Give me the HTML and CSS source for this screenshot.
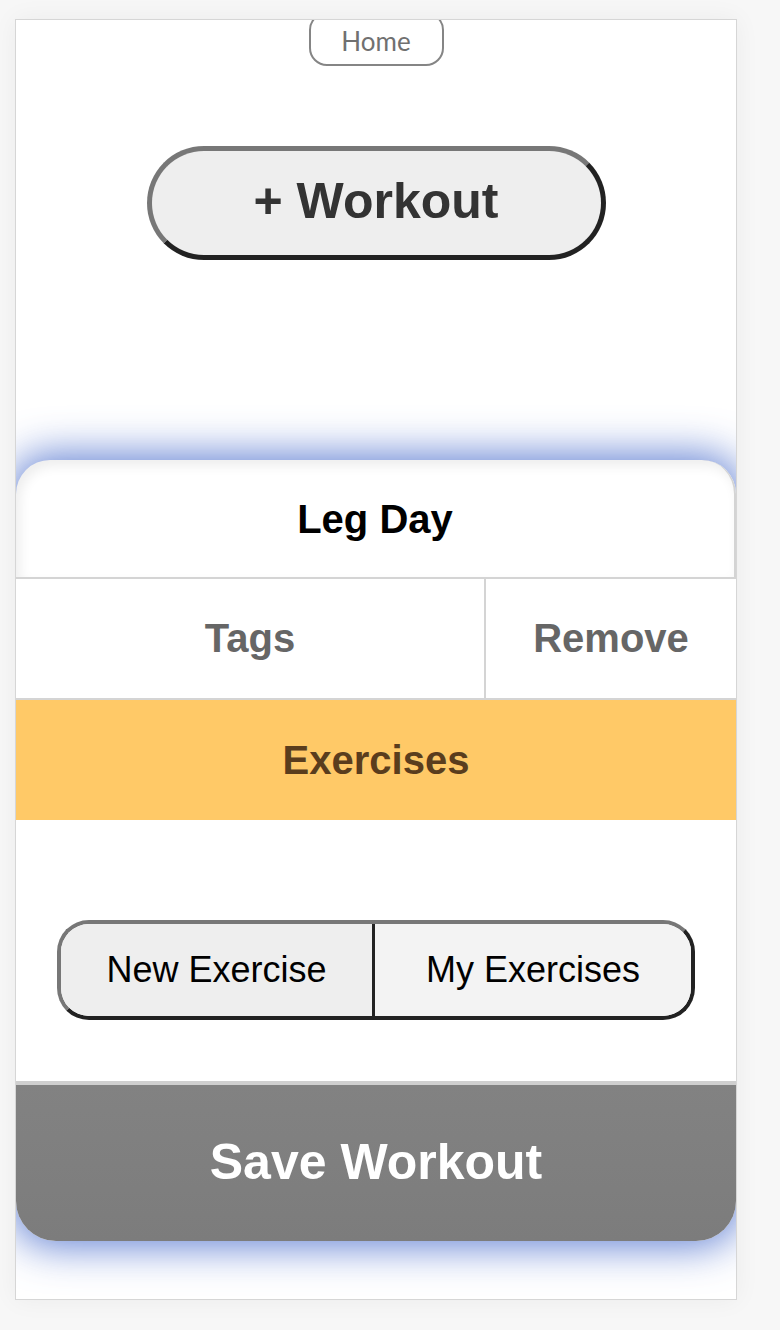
FILE: index.html
```html
<!DOCTYPE html>
<html lang="en">
<head>
<meta charset="utf-8">
<title>Workout</title>
<link rel="stylesheet" href="styles.css">
</head>
<body>
<div class="frame">
  <div class="top">
    <button class="home-btn">Home</button>
    <button class="add-workout">+ Workout</button>
  </div>
  <section class="card">
    <header class="card-title">Leg Day</header>
    <div class="actions">
      <div class="action tags">Tags</div>
      <div class="action remove">Remove</div>
    </div>
    <div class="exercises">Exercises</div>
    <div class="exercise-area">
      <div class="segment">
        <button class="seg seg-left">New Exercise</button>
        <button class="seg seg-right">My Exercises</button>
      </div>
    </div>
    <button class="save">Save Workout</button>
  </section>
</div>
</body>
</html>
```
FILE: styles.css
```css
* { box-sizing: border-box; }
html, body { margin: 0; padding: 0; }
body {
  background: #f7f7f7;
  font-family: "Liberation Sans", Arial, sans-serif;
  width: 780px;
  height: 1330px;
}
.frame {
  margin: 19px 0 0 15px;
  width: 722px;
  height: 1281px;
  background: #fff;
  border: 1px solid #d6d6d6;
  overflow: hidden;
  box-shadow: 0 0 24px rgba(0,0,0,0.05);
}
.top {
  display: flex;
  flex-direction: column;
  align-items: center;
}
button {
  font-family: inherit;
  cursor: pointer;
}
.home-btn {
  margin-top: -8px;
  width: 135px;
  height: 54px;
  border: 2px solid #858585;
  border-radius: 18px;
  background: #fff;
  color: #707070;
  font-family: Lato, "Open Sans", sans-serif;
  font-size: 26px;
  padding: 3px 0 0;
}
.add-workout {
  margin-top: 80px;
  width: 459px;
  height: 114px;
  border: 5px solid;
  border-color: #777 #222 #222 #777;
  border-radius: 57px;
  background: #eee;
  color: #333;
  font-size: 50px;
  font-weight: bold;
  padding: 0 0 4px;
}
.card {
  margin-top: 200px;
  display: flex;
  flex-direction: column;
  border-radius: 34px 34px 40px 40px;
  box-shadow: 0 0 40px 6px rgba(75,110,205,0.85);
  background: #fff;
}
.card-title {
  height: 119px;
  display: flex;
  align-items: center;
  justify-content: center;
  font-size: 40px;
  font-weight: bold;
  color: #000;
  border-radius: 34px 34px 0 0;
  border-right: 2px solid #d4d4d4;
  border-bottom: 2px solid #d4d4d4;
  box-shadow: inset 4px 6px 12px rgba(0,0,0,0.07);
  padding-top: 2px;
}
.actions {
  display: grid;
  grid-template-columns: 470px 1fr;
  height: 121px;
  border-bottom: 2px solid #d4d4d4;
}
.action {
  display: flex;
  align-items: center;
  justify-content: center;
  font-size: 40px;
  font-weight: bold;
  color: #666;
}
.tags { border-right: 2px solid #d4d4d4; }
.exercises {
  height: 120px;
  background: #ffc967;
  color: #5a3d1d;
  display: flex;
  align-items: center;
  justify-content: center;
  font-size: 40px;
  font-weight: bold;
}
.exercise-area {
  height: 265px;
  padding-top: 100px;
  display: flex;
  justify-content: center;
  border-bottom: 4px solid #cfcfcf;
}
.segment {
  display: flex;
  width: 638px;
  height: 100px;
  border: 4px solid;
  border-color: #777 #222 #222 #777;
  border-radius: 32px;
  overflow: hidden;
}
.seg {
  border: none;
  font-size: 36px;
  color: #000;
  padding: 0;
}
.seg-left {
  width: 314px;
  flex: none;
  background: #eeeeee;
  border-right: 3px solid #222;
}
.seg-right {
  flex: 1;
  background: #f3f3f3;
}
.save {
  height: 156px;
  border: none;
  border-radius: 0 0 40px 40px;
  background: linear-gradient(#828282, #7c7c7c);
  color: #fff;
  font-size: 50px;
  font-weight: bold;
  padding: 0 0 2px;
}
```
